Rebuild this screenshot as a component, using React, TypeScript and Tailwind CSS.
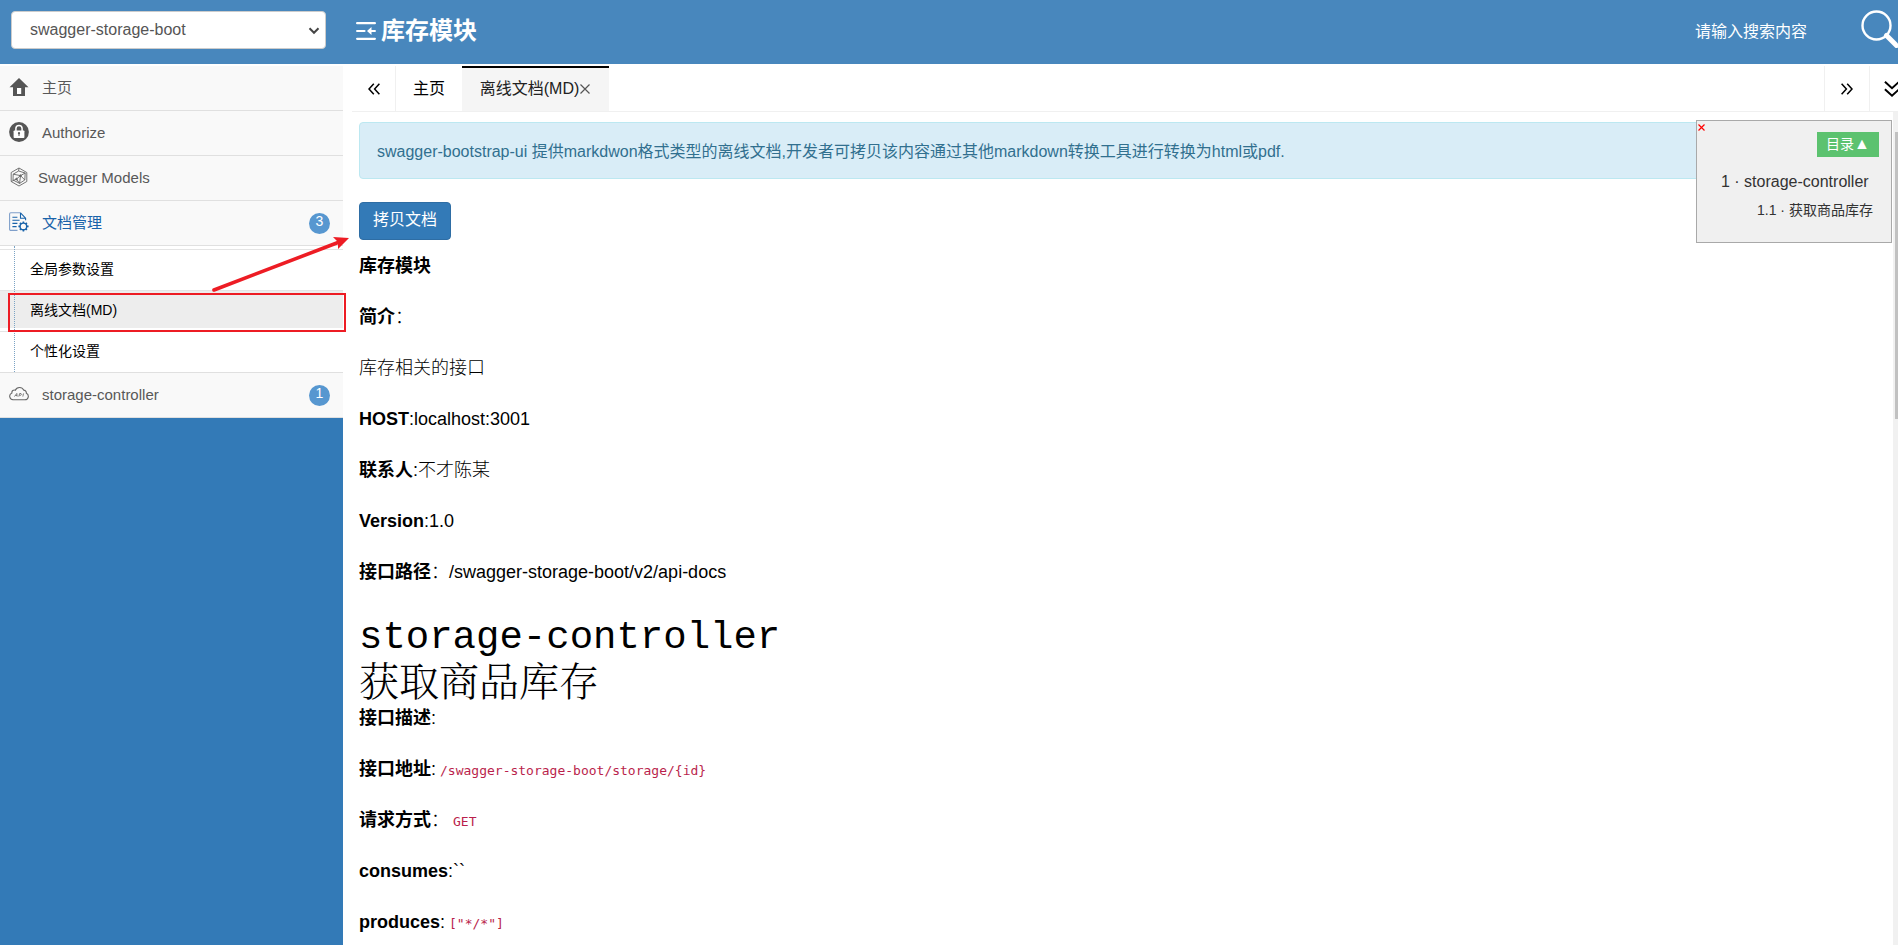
import React from "react";

const HomeIcon = () => (
  <svg viewBox="0 0 20 20" className="size-5" fill="none" aria-hidden="true">
    <path d="M10 1 L19.5 10.2 H16 V19 H4 V10.2 H0.5 Z" fill="#555" />
    <path d="M8 11 H12.2 V17 H8 Z" fill="#fff" />
  </svg>
);

const LockIcon = () => (
  <svg viewBox="0 0 20 20" className="size-5" fill="none" aria-hidden="true">
    <circle cx="10" cy="10" r="9.9" fill="#555" />
    <path d="M6.9 9 V6.6 a3.1 3.1 0 0 1 6.2 0 V9" stroke="#fff" strokeWidth="1.5" />
    <rect x="4.6" y="8.4" width="10.8" height="7.6" rx="0.8" fill="#fff" />
    <circle cx="10" cy="11.2" r="1.1" fill="#555" />
    <path d="M10 11.5 V14" stroke="#555" strokeWidth="1" />
  </svg>
);

const ModelIcon = () => (
  <svg viewBox="0 0 20 20" className="size-5" fill="none" stroke="#666" strokeWidth="0.9" aria-hidden="true">
    <path d="M10 1 L17.8 5.5 V14.5 L10 19 L2.2 14.5 V5.5 Z" />
    <path d="M4.2 7.2 L11.5 8.6 L10.6 16.4 L4 13 Z M11.5 8.6 L16.2 6 L15.8 13 L10.6 16.4 M4.2 7.2 L9.6 4 L16.2 6 M10 1 L9.6 4 M7.5 12 L11.5 8.6 L15.8 13 M2.2 14.5 L7.5 12 L10.6 16.4" />
    <circle cx="7.5" cy="12" r="0.8" fill="#666" />
    <circle cx="11.5" cy="8.6" r="0.8" fill="#666" />
  </svg>
);

const DocIcon = () => (
  <svg viewBox="0 0 20 20" className="size-5" fill="none" stroke="#1963aa" strokeWidth="1.1" aria-hidden="true">
    <path d="M8.5 18.4 H1.8 a1.2 1.2 0 0 1 -1.2 -1.2 V2 A1.2 1.2 0 0 1 1.8 0.8 H11.5" stroke="#7f9fca" />
    <path d="M11.5 0.8 L16.6 6.2 V8.3 M11.5 0.8 V6.2 H16.6" />
    <path d="M3.4 5.2 H8.4 M3.4 8.3 H10.6 M3.4 11.4 H8.4 M3.4 14.6 H7.6" />
    <circle cx="14.4" cy="14.4" r="3.3" strokeWidth="1.4" />
    <path d="M14.4 9.4 V11 M14.4 17.8 V19.6 M9.4 14.4 H11 M17.8 14.4 H19.6 M10.9 10.9 L12 12 M16.8 16.8 L17.9 17.9 M17.9 10.9 L16.8 12 M12 16.8 L10.9 17.9" strokeWidth="1.6" />
  </svg>
);

const CloudIcon = () => (
  <svg viewBox="0 0 20 20" className="size-5" fill="none" aria-hidden="true">
    <path
      d="M4 15.8 H16 a3.4 3.4 0 0 0 1.3 -6.5 a2.7 2.7 0 0 0 -2.6 -3.2 a4.6 4.6 0 0 0 -8.4 0.2 a2.4 2.4 0 0 0 -3.4 2.6 a3.6 3.6 0 0 0 1.1 6.9 Z"
      stroke="#666"
      strokeWidth="1.1"
    />
    <path d="M5.4 12.6 L7.8 9.4 L8.2 12.6 M6.4 11.5 H8 M9.8 12.6 L10.6 9.5 H12 a1 1 0 0 1 0 1.7 H10.3 M13.8 12.6 L14.6 9.4" stroke="#666" strokeWidth="0.8" />
  </svg>
);

const FoldIcon = () => (
  <svg viewBox="0 0 20 18" className="h-[18px] w-5" fill="none" stroke="#fff" strokeWidth="2.2" strokeLinecap="round" aria-hidden="true">
    <path d="M1.1 1.2 H18.9 M1.1 9 H8.5 M1.1 16.8 H18.9 M14 9 H18.9" />
    <path d="M15.5 5 L11 9 L15.5 13 Z" fill="#fff" stroke="none" />
  </svg>
);

const SearchIcon = () => (
  <svg viewBox="0 0 38 38" className="size-[38px]" fill="none" stroke="#fff" aria-hidden="true">
    <circle cx="15.5" cy="15.5" r="14" strokeWidth="2.4" />
    <path d="M25.5 25.5 L35.5 35.5" strokeWidth="5" strokeLinecap="round" />
  </svg>
);

const Chevrons = ({ className }: { className: string }) => (
  <svg viewBox="0 0 12 12" className={className} fill="none" stroke="#000" strokeWidth="1.5" aria-hidden="true">
    <path d="M5.8 0.7 L1 6 L5.8 11.3 M11.4 0.7 L6.6 6 L11.4 11.3" />
  </svg>
);

function Badge({ children }: { children: React.ReactNode }) {
  return (
    <span className="ml-auto h-[21px] w-[21px] rounded-full bg-[#5797d0] text-center text-sm leading-4 text-white">
      {children}
    </span>
  );
}

function MenuRow({ icon, label, count, active, tight }: { icon: React.ReactNode; label: string; count?: number; active?: boolean; tight?: boolean }) {
  return (
    <a
      href="#"
      className={
        "flex h-[45px] items-center border-b border-[#e0e0e0] bg-[#f9f9f9] pr-[13px] pl-[9px] text-[15px] " +
        (tight ? "gap-[9px] " : "gap-[13px] ") +
        (active ? "text-[#1963aa]" : "text-[#585858]")
      }
    >
      <span className="pb-0.5">{icon}</span>
      <span className="pt-px">{label}</span>
      {count !== undefined && <Badge>{count}</Badge>}
    </a>
  );
}

const subItems = ["全局参数设置", "离线文档(MD)", "个性化设置"];

function Field({ name, children }: { name: string; children?: React.ReactNode }) {
  return (
    <p>
      <strong className="font-bold">{name}</strong>
      {children}
    </p>
  );
}

const Code = ({ children }: { children: React.ReactNode }) => (
  <code className="px-1 font-['DejaVu_Sans_Mono',monospace] text-[13px] leading-none text-[#ba1f4c]">{children}</code>
);

export default function App() {
  return (
    <div className="relative flex h-screen flex-col overflow-hidden bg-white font-['Liberation_Sans','Noto_Sans_CJK_SC',sans-serif] text-black">
      <header className="flex h-16 shrink-0 items-center overflow-hidden bg-[#4887bd]">
        <div className="w-[343px] shrink-0 pb-1 pl-[11px]">
          <div className="relative w-[315px]">
            <select aria-label="服务分组" className="h-[38px] w-full appearance-none rounded border border-[#ccc] bg-white pl-[18px] text-base text-[#555]">
              <option>swagger-storage-boot</option>
            </select>
            <svg viewBox="0 0 12 8" className="pointer-events-none absolute top-4 right-1.5 h-2 w-3" fill="none" stroke="#444" strokeWidth="2" aria-hidden="true">
              <path d="M1.5 1.3 L6 5.8 L10.5 1.3" />
            </svg>
          </div>
        </div>
        <h1 className="flex items-center gap-[5px] pb-0.5 pl-[13px] text-2xl font-bold text-white">
          <FoldIcon />
          库存模块
        </h1>
        <input
          aria-label="搜索"
          placeholder="请输入搜索内容"
          className="ml-auto w-[166px] bg-transparent text-base text-white outline-none placeholder:text-white"
        />
        <button aria-label="搜索按钮" className="shrink-0 -mr-px pb-[7px]">
          <SearchIcon />
        </button>
      </header>

      <div className="flex min-h-0 flex-1">
        <nav className="flex w-[343px] shrink-0 flex-col bg-[#337ab7]">
          <div className="bg-white pt-0.5">
            <MenuRow icon={<HomeIcon />} label="主页" />
            <MenuRow icon={<LockIcon />} label="Authorize" />
            <MenuRow icon={<ModelIcon />} label="Swagger Models" tight />
            <MenuRow icon={<DocIcon />} label="文档管理" count={3} active />
            <div className="relative border-b border-[#e0e0e0] pt-[3px]">
              <ul className="text-sm">
                {subItems.map((t, i) => (
                  <li key={t} className="border-t border-[#e4e4e4] pb-[3px]">
                    <a href="#" className={"flex h-[37px] items-center pl-[30px] " + (i === 1 ? "bg-[#ededed]" : "")}>
                      {t}
                    </a>
                  </li>
                ))}
              </ul>
              <span className="absolute inset-y-0 left-[14px] border-l border-dotted border-[#7ba3c4]" />
            </div>
            <MenuRow icon={<CloudIcon />} label="storage-controller" count={1} />
          </div>
        </nav>

        <main className="flex min-w-0 flex-1 flex-col pt-0.5">
          <div className="ml-[9px] flex h-[46px] shrink-0 overflow-hidden border-b border-[#f0f0f0] text-base">
            <button aria-label="向左" className="flex w-11 items-center justify-center border-r border-[#f0f0f0]">
              <Chevrons className="size-3" />
            </button>
            <button className="w-[66px]">主页</button>
            <button className="flex w-[147px] items-center justify-center border-t-2 border-black bg-[#f5f5f5] pb-0.5 text-[#222]">
              离线文档(MD)
              <svg viewBox="0 0 12 12" className="size-3" stroke="#555" strokeWidth="1.2" aria-hidden="true">
                <path d="M1.5 1.5 L10.5 10.5 M10.5 1.5 L1.5 10.5" />
              </svg>
            </button>
            <button aria-label="向右" className="ml-auto flex w-[45px] items-center justify-center border-l border-[#f0f0f0]">
              <Chevrons className="size-3 rotate-180" />
            </button>
            <button aria-label="更多" className="flex w-[45px] -mr-4 shrink-0 items-center justify-center border-l border-[#f0f0f0]">
              <Chevrons className="size-4 -rotate-90" />
            </button>
          </div>

          <div className="flex min-h-0 flex-1">
            <div className="min-w-0 flex-1 overflow-hidden pt-2.5 pr-2 pl-4">
              <div className="rounded border border-[#bce8f1] bg-[#d9edf7] px-[17px] pt-[17px] pb-3.5 text-base leading-6 text-[#31708f]">
                swagger-bootstrap-ui 提供markdwon格式类型的离线文档,开发者可拷贝该内容通过其他markdown转换工具进行转换为html或pdf.
              </div>
              <button className="mt-[23px] h-[38px] w-[92px] rounded border border-[#2e6da4] bg-[#337ab7] pb-0.5 text-base text-white">
                拷贝文档
              </button>
              <article className="mt-[13px] text-lg leading-[26px] font-light">
                <div className="flex flex-col gap-[25px]">
                  <Field name="库存模块" />
                  <Field name="简介">：</Field>
                  <p>库存相关的接口</p>
                  <Field name="HOST">:localhost:3001</Field>
                  <Field name="联系人">:不才陈某</Field>
                  <Field name="Version">:1.0</Field>
                  <Field name="接口路径">：/swagger-storage-boot/v2/api-docs</Field>
                </div>
                <h2 className="mt-[34px] font-['Liberation_Mono',monospace] text-[39px] leading-[38px]">storage-controller</h2>
                <h3 className="mb-1 font-['Noto_Serif_CJK_SC','Noto_Sans_CJK_SC',serif] text-[40px] leading-[44px]">获取商品库存</h3>
                <div className="flex flex-col gap-[25px]">
                  <Field name="接口描述">:</Field>
                  <Field name="接口地址">:<Code>/swagger-storage-boot/storage/{"{id}"}</Code></Field>
                  <Field name="请求方式">：<Code>GET</Code></Field>
                  <Field name="consumes">:``</Field>
                  <Field name="produces">:<Code>["*/*"]</Code></Field>
                </div>
              </article>
            </div>
            <div className="w-[5px] shrink-0 bg-[#f1f1f1] pt-5 pl-0.5" aria-hidden="true">
              <div className="h-[287px] bg-[#c1c1c1]" />
            </div>
          </div>
        </main>
      </div>

      <aside className="absolute top-[120px] right-1.5 h-[123px] w-[196px] border border-[#a9a9a9] bg-[#f0f0f0] text-[#333]">
        <button aria-label="关闭" className="absolute top-[3px] left-px">
          <svg viewBox="0 0 7 7" className="size-[7px]" stroke="#f00" strokeWidth="1.2" aria-hidden="true">
            <path d="M0.5 0.5 L6.5 6.5 M6.5 0.5 L0.5 6.5" />
          </svg>
        </button>
        <button className="mt-[11px] mr-3 ml-auto flex h-[25px] w-[62px] items-center justify-center bg-[#5cc26f] pb-0.5 text-sm text-white">
          目录<span className="text-base leading-none">▲</span>
        </button>
        <a href="#" className="mt-[13px] block pl-6 text-base leading-6">1 · storage-controller</a>
        <a href="#" className="mt-1 block pl-[60px] text-sm leading-6">1.1 · 获取商品库存</a>
      </aside>

      <div className="pointer-events-none absolute top-[293px] left-2 h-[39px] w-[338px] border-2 border-[#ed1c24]" />
      <svg viewBox="0 0 140 56" className="pointer-events-none absolute top-[236px] left-[211px] h-14 w-[140px]" aria-hidden="true">
        <path d="M3 54 L127 6.5" stroke="#ed1c24" strokeWidth="3.6" strokeLinecap="round" />
        <path d="M138 2 L122 1 L127 6 L127 13 Z" fill="#ed1c24" />
      </svg>
    </div>
  );
}
